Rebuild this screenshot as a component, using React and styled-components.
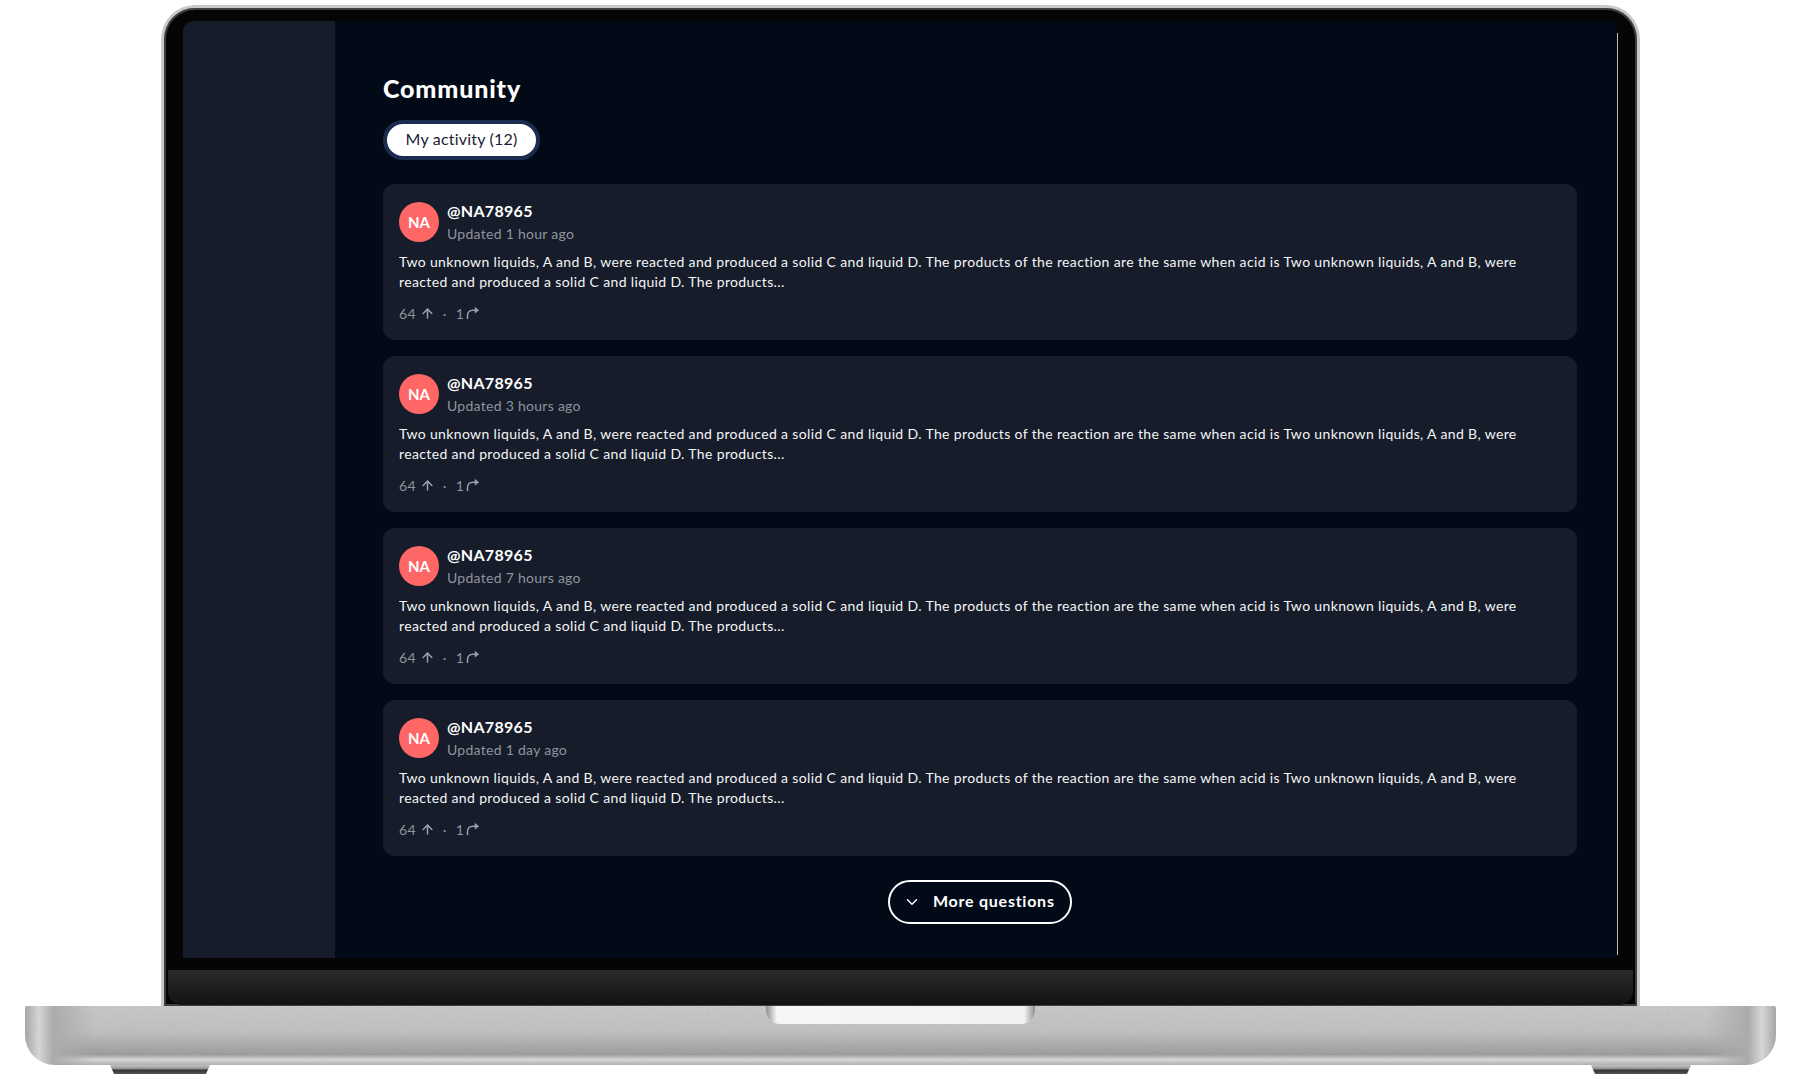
import React from "react";
import styled, { createGlobalStyle } from "styled-components";
import { ArrowUp, ChevronDown } from "lucide-react";

const GlobalStyle = createGlobalStyle`
  html, body {
    margin: 0;
    background: #fff;
  }
  body {
    font-family: "Lato", "Liberation Sans", sans-serif;
  }
`;

const questions = [
  { id: 1, age: "1 hour ago" },
  { id: 2, age: "3 hours ago" },
  { id: 3, age: "7 hours ago" },
  { id: 4, age: "1 day ago" },
];

const body =
  "Two unknown liquids, A and B, were reacted and produced a solid C and liquid D. The products of the reaction are the same when acid is Two unknown liquids, A and B, were reacted and produced a solid C and liquid D. The products...";

function ShareIcon() {
  return (
    <ShareSvg width="14" height="14" viewBox="0 0 14 14" fill="none" stroke="#9aa0aa" strokeWidth="1.5">
      <path d="M1.5 13V9.5C1.5 6 3.8 4.2 7 4.2H11" />
      <path d="M9 1.2L12.8 4.2L9 7.2Z" fill="#9aa0aa" strokeWidth="0.4" />
    </ShareSvg>
  );
}

// grain over the aluminium of the base
function MetalGrain() {
  return (
    <GrainSvg aria-hidden="true">
      <filter id="grain">
        <feTurbulence type="fractalNoise" baseFrequency="0.8" numOctaves="2" seed="4" />
        <feColorMatrix values="0 0 0 0 0.45  0 0 0 0 0.45  0 0 0 0 0.45  2.4 0 0 0 -0.85" />
      </filter>
      <rect width="100%" height="100%" filter="url(#grain)" />
    </GrainSvg>
  );
}

function Question({ age }) {
  return (
    <Card>
      <CardHead>
        <Avatar>NA</Avatar>
        <div>
          <UserName>@NA78965</UserName>
          <Updated>Updated {age}</Updated>
        </div>
      </CardHead>
      <Body>{body}</Body>
      <Stats>
        <span>64</span>
        <ArrowUp size={15} strokeWidth={2.4} color="#9aa0aa" />
        <Dot>·</Dot>
        <span>1</span>
        <ShareIcon />
      </Stats>
    </Card>
  );
}

export default function App() {
  return (
    <Page>
      <GlobalStyle />
      <Lid>
        <Screen>
          <Sidebar />
          <Main>
            <Title>Community</Title>
            <Pill>My activity (12)</Pill>
            <CardList>
              {questions.map((q) => (
                <Question key={q.id} age={q.age} />
              ))}
            </CardList>
            <MoreRow>
              <MoreButton>
                <ChevronDown size={18} strokeWidth={2} />
                More questions
              </MoreButton>
            </MoreRow>
          </Main>
        </Screen>
        <Chin />
      </Lid>
      <Base>
        <MetalGrain />
        <Notch />
      </Base>
      <Feet>
        <Foot />
        <Foot />
      </Feet>
    </Page>
  );
}

const Page = styled.div`
  width: 1801px;
  height: 1085px;
  padding-top: 5px;
  box-sizing: border-box;
  overflow: hidden;
  background: #fff;
`;

const Lid = styled.div`
  box-sizing: border-box;
  width: 1479px;
  height: 1001px;
  margin-left: 161px;
  padding: 13px 19px 0;
  background: #050505;
  border: solid #c8c8ca;
  border-width: 3px 3px 0;
  border-radius: 34px 34px 0 0;
  box-shadow: inset 0 0 0 2px #3e3e3f;
`;

const Screen = styled.div`
  display: flex;
  height: 937px;
  border-radius: 10px 10px 0 0;
  overflow: hidden;
  background: #020a18;
`;

const Sidebar = styled.aside`
  flex: 0 0 152px;
  background: #161c2a;
`;

const Main = styled.main`
  position: relative;
  flex: 1;
  padding: 50px 41px 0 48px;
  background: #020a18;

  &::after {
    content: "";
    position: absolute;
    right: 0;
    top: 12px;
    bottom: 3px;
    width: 1px;
    background: #b9bcc2;
  }
`;

const Title = styled.h1`
  margin: 0;
  font-size: 25px;
  line-height: 34px;
  font-weight: 900;
  letter-spacing: 0.85px;
  color: #fff;
`;

const Pill = styled.div`
  display: flex;
  align-items: center;
  justify-content: center;
  box-sizing: border-box;
  width: 157px;
  height: 40px;
  margin-top: 15px;
  padding-bottom: 3px;
  border: 4px solid #1c2c4e;
  border-radius: 20px;
  background: #fff;
  color: #1a2233;
  font-size: 16px;
  letter-spacing: 0.2px;
`;

const CardList = styled.div`
  display: flex;
  flex-direction: column;
  gap: 16px;
  margin-top: 24px;
`;

const Card = styled.article`
  box-sizing: border-box;
  height: 156px;
  padding: 16px;
  border-radius: 12px;
  background: #161c2a;
  color: #fff;
`;

const CardHead = styled.header`
  display: flex;
  align-items: center;
  gap: 8px;
`;

const Avatar = styled.div`
  display: flex;
  align-items: center;
  justify-content: center;
  width: 40px;
  height: 40px;
  border-radius: 50%;
  background: #ff6666;
  font-size: 15px;
  font-weight: 700;
`;

const UserName = styled.div`
  padding-bottom: 2px;
  font-size: 16px;
  line-height: 22px;
  font-weight: 700;
  letter-spacing: 0.3px;
`;

const Updated = styled.div`
  font-size: 14px;
  line-height: 20px;
  letter-spacing: 0.28px;
  color: #8f949e;
`;

const Body = styled.p`
  margin: 8px 0 0;
  font-size: 14px;
  line-height: 20px;
  letter-spacing: 0.36px;
  color: #f4f5f6;
`;

const Stats = styled.div`
  display: flex;
  align-items: center;
  gap: 4px;
  height: 20px;
  margin-top: 11px;
  font-size: 14px;
  letter-spacing: 0.3px;
  color: #8f949e;
`;

const Dot = styled.span`
  margin: 0 5px 0 4px;
`;

const ShareSvg = styled.svg`
  margin-left: -2px;
`;

const MoreRow = styled.div`
  display: flex;
  justify-content: center;
  margin-top: 24px;
`;

const MoreButton = styled.button`
  display: flex;
  align-items: center;
  gap: 12px;
  box-sizing: border-box;
  width: 184px;
  height: 44px;
  padding: 0 13px 3px;
  border: 2px solid #fff;
  border-radius: 22px;
  background: transparent;
  color: #fff;
  font-family: inherit;
  font-size: 16px;
  font-weight: 700;
  letter-spacing: 0.75px;

  svg {
    margin-top: 3px;
  }
`;

const Chin = styled.div`
  height: 35px;
  margin: 12px -15px 0;
  border-radius: 0 0 14px 14px;
  background: linear-gradient(#2a2a2a, #121212);
`;

const Base = styled.div`
  position: relative;
  height: 59px;
  margin: 0 25px;
  overflow: hidden;
  border-radius: 2px 2px 30px 30px;
  background:
    linear-gradient(90deg, #a4a4a6 0, #dcdcde 14px, #aaaaac 28px, transparent 70px, transparent calc(100% - 70px), #aaaaac calc(100% - 28px), #dcdcde calc(100% - 14px), #a4a4a6 100%),
    linear-gradient(#cacacc 0, #c0c0c2 45%, #98989a 82%, #dcdcde 91%, #b0b0b2 100%);
`;

const GrainSvg = styled.svg`
  position: absolute;
  inset: 0;
  width: 100%;
  height: 100%;
  opacity: 0.4;
`;

const Notch = styled.div`
  position: absolute;
  left: 741px;
  top: 0;
  width: 269px;
  height: 18px;
  border-radius: 0 0 14px 14px;
  background: linear-gradient(90deg, #8f8f91, #f6f6f6 4%, #f2f2f2 96%, #8f8f91);
`;

const Feet = styled.div`
  display: flex;
  justify-content: space-between;
  padding: 0 110px;
`;

const Foot = styled.div`
  width: 100px;
  height: 9px;
  clip-path: polygon(0 0, 100% 0, 96% 100%, 4% 100%);
  background: linear-gradient(#c4c4c6 0, #8e8e90 45%, #333 55%, #555 100%);
`;
